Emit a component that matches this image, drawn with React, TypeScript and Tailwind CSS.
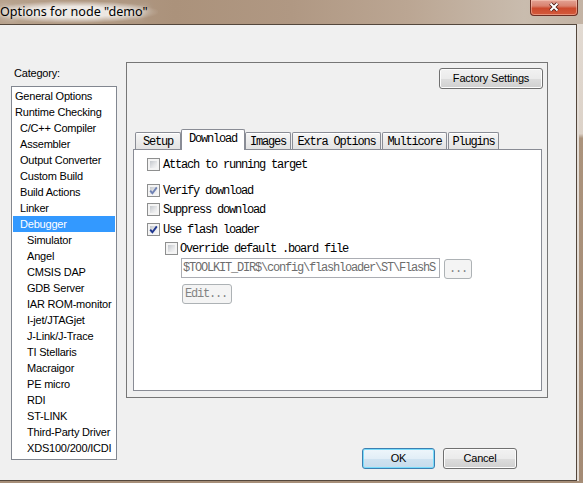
import React from "react";

const uiFont = "font-['Liberation_Sans',Arial,sans-serif] text-[11px] tracking-[-0.2px]";
const monoFont = "font-['Liberation_Mono','Courier_New',monospace] text-[12px] tracking-[-1.2px]";

const btnNormal =
  "rounded-[3px] border border-[#707070] bg-[linear-gradient(to_bottom,#f2f2f2_0%,#ebebeb_50%,#dddddd_51%,#cfcfcf_100%)] shadow-[inset_0_0_0_1px_#fcfcfc] text-black flex items-center justify-center";
const btnDefault =
  "rounded-[3px] border border-[#3c7fb1] bg-[linear-gradient(to_bottom,#eef6fb_0%,#e2eef7_50%,#d0e3f1_51%,#c6dbeb_100%)] shadow-[inset_0_0_0_1px_#79dcfb] text-black flex items-center justify-center";
const btnDisabled =
  "rounded-[3px] border border-[#adb2b5] bg-[#f4f4f4] text-[#838383] flex items-center";

type Item = { label: string; level: 0 | 1 | 2; selected?: boolean };

const categories: Item[] = [
  { label: "General Options", level: 0 },
  { label: "Runtime Checking", level: 0 },
  { label: "C/C++ Compiler", level: 1 },
  { label: "Assembler", level: 1 },
  { label: "Output Converter", level: 1 },
  { label: "Custom Build", level: 1 },
  { label: "Build Actions", level: 1 },
  { label: "Linker", level: 1 },
  { label: "Debugger", level: 1, selected: true },
  { label: "Simulator", level: 2 },
  { label: "Angel", level: 2 },
  { label: "CMSIS DAP", level: 2 },
  { label: "GDB Server", level: 2 },
  { label: "IAR ROM-monitor", level: 2 },
  { label: "I-jet/JTAGjet", level: 2 },
  { label: "J-Link/J-Trace", level: 2 },
  { label: "TI Stellaris", level: 2 },
  { label: "Macraigor", level: 2 },
  { label: "PE micro", level: 2 },
  { label: "RDI", level: 2 },
  { label: "ST-LINK", level: 2 },
  { label: "Third-Party Driver", level: 2 },
  { label: "XDS100/200/ICDI", level: 2 },
];

const indent: Record<number, string> = {
  0: "pl-[2px]",
  1: "pl-[7px]",
  2: "pl-[14px]",
};

type Tab = { label: string; w: string; selected?: boolean };

const tabs: Tab[] = [
  { label: "Setup", w: "w-[46px]" },
  { label: "Download", w: "w-[64px]", selected: true },
  { label: "Images", w: "w-[46px]" },
  { label: "Extra Options", w: "w-[89px] ml-[1px]" },
  { label: "Multicore", w: "w-[65px] ml-[1px]" },
  { label: "Plugins", w: "w-[51px] ml-[1px]" },
];

function CheckBox({ checked, dim }: { checked?: boolean; dim?: boolean }) {
  return (
    <span className="relative w-[13px] h-[13px] shrink-0 border border-[#8e8f8f] bg-[#f4f4f4] p-[2px] flex">
      <span className="flex-1 bg-[linear-gradient(135deg,#c3c7cc_0%,#e6e7e9_60%,#f6f6f6_100%)]" />
      {checked && (
        <svg className="absolute inset-0" width="11" height="11" viewBox="0 0 11 11">
          <path
            d="M2.2 5.6 L4.4 8.2 L8.8 2.4"
            fill="none"
            stroke={dim ? "#6f82b4" : "#1f3790"}
            strokeWidth="1.9"
          />
        </svg>
      )}
    </span>
  );
}

function CheckRow({
  label,
  checked,
  dim,
  className,
  gap,
}: {
  label: string;
  checked?: boolean;
  dim?: boolean;
  className: string;
  gap: string;
}) {
  return (
    <div className={`flex items-center h-[13px] ${className}`}>
      <CheckBox checked={checked} dim={dim} />
      <span className={`${monoFont} text-black whitespace-nowrap leading-[13px] pt-[1px] ${gap}`}>{label}</span>
    </div>
  );
}

function CloseButton() {
  return (
    <div className="ml-auto mr-[5px] w-[48px] h-[16px] shrink-0 rounded-b-[4px] border border-t-0 border-[#6e2d22] bg-[linear-gradient(to_bottom,#e3a294_0%,#d9826f_40%,#cc4a2e_55%,#d45a3c_100%)] shadow-[inset_0_0_0_1px_rgba(255,215,200,0.45)] flex items-center justify-center pb-[2px]">
      <svg width="12" height="10" viewBox="0 0 12 10">
        <path d="M2.5 1.5 L9.5 8.5 M9.5 1.5 L2.5 8.5" stroke="#4a1a14" strokeWidth="3.8" />
        <path d="M2.5 1.5 L9.5 8.5 M9.5 1.5 L2.5 8.5" stroke="#ffffff" strokeWidth="2" />
      </svg>
    </div>
  );
}

export default function App() {
  return (
    <div className="w-[583px] h-[483px] overflow-hidden flex flex-col bg-[#a68e78]">
      {/* caption bar */}
      <div className="h-[24px] shrink-0 flex items-start bg-[linear-gradient(90deg,#b7a18c_0%,#ab927b_30%,#b09883_50%,#bba693_70%,#c9bcae_90%,#c3b3a4_100%)]">
        <div className="h-[24px] flex items-center -ml-[10px]">
          <span className="px-[10px] py-[3px] font-['Noto_Sans','Open_Sans',sans-serif] text-[12.6px] leading-[16px] text-black whitespace-nowrap bg-[radial-gradient(ellipse_at_center,rgba(255,255,255,0.75)_35%,rgba(255,255,255,0)_72%)] [text-shadow:0_0_6px_rgba(255,255,255,0.95),0_0_10px_rgba(255,255,255,0.8)]">
            Options for node "demo"
          </span>
        </div>
        <CloseButton />
      </div>

      <div className="flex h-[457px] shrink-0">
        {/* client area */}
        <div className="w-[577px] h-full bg-[#f0f0f0] border-t border-r border-b border-[#54473c] flex items-start">
          {/* category column */}
          <div className="ml-[11px] w-[106px] pt-[42px] flex flex-col">
            <div className={`${uiFont} text-black leading-[13px] pl-[3px]`}>Category:</div>
            <div className="mt-[6px] h-[374px] border border-[#828790] bg-white pt-[1px]">
              {categories.map((c) => (
                <div
                  key={c.label}
                  className={`mx-[1px] h-[16px] leading-[16px] whitespace-nowrap ${uiFont} ${indent[c.level]} ${
                    c.selected ? "bg-[#3399ff] text-white" : "text-black"
                  }`}
                >
                  {c.label}
                </div>
              ))}
            </div>
          </div>

          {/* options column */}
          <div className="ml-[9px] pt-[37px] flex flex-col">
            <div className="w-[422px] h-[336px] border border-[#767676] flex flex-col">
              <div className="flex justify-end pt-[5px] pr-[4px]">
                <div className={`w-[104px] h-[21px] ${btnNormal} ${uiFont}`}>Factory Settings</div>
              </div>

              {/* tab strip */}
              <div className="mt-[40px] ml-[6px] pl-[2px] h-[20px] flex items-end">
                {tabs.map((t) =>
                  t.selected ? (
                    <div
                      key={t.label}
                      className={`${t.w} h-[21px] -mb-[1px] relative z-10 bg-white border border-b-0 border-[#898c95] rounded-t-[2px] flex items-center justify-center pb-[2px] ${monoFont} text-black`}
                    >
                      {t.label}
                    </div>
                  ) : (
                    <div
                      key={t.label}
                      className={`${t.w} h-[17px] border border-b-0 border-[#898c95] rounded-t-[2px] bg-[linear-gradient(to_bottom,#f6f6f6_0%,#ececec_50%,#e2e2e2_100%)] shadow-[inset_0_1px_0_#ffffff] flex items-center justify-center pt-[2px] ${monoFont} text-black`}
                    >
                      {t.label}
                    </div>
                  )
                )}
              </div>

              {/* tab page */}
              <div className="ml-[6px] w-[409px] h-[242px] border border-[#898c95] bg-white flex flex-col">
                <CheckRow label="Attach to running target" className="mt-[8px] ml-[13px]" gap="ml-[3px]" />
                <CheckRow label="Verify download" checked dim className="mt-[13px] ml-[13px]" gap="ml-[3px]" />
                <CheckRow label="Suppress download" className="mt-[6px] ml-[13px]" gap="ml-[3px]" />
                <CheckRow label="Use flash loader" checked className="mt-[7px] ml-[13px]" gap="ml-[3px]" />
                <CheckRow label="Override default .board file" className="mt-[6px] ml-[31px]" gap="ml-[2px]" />

                <div className="mt-[3px] ml-[47px] flex items-start gap-[4px]">
                  <div className="w-[259px] h-[20px] border border-[#abadb3] bg-white flex items-center pl-[1px] pr-[1px]">
                    <span className={`block w-full overflow-hidden ${monoFont} leading-[14px] text-[#6d6d6d] whitespace-nowrap`}>
                      {"$TOOLKIT_DIR$\\config\\flashloader\\ST\\FlashS"}
                    </span>
                  </div>
                  <div className={`mt-[1px] w-[28px] h-[20px] ${btnDisabled} justify-center ${monoFont}`}>...</div>
                </div>

                <div className={`mt-[5px] ml-[48px] w-[50px] h-[20px] ${btnDisabled} pl-[2px] ${monoFont}`}>
                  Edit...
                </div>
              </div>
            </div>

            <div className="mt-[50px] flex justify-end gap-[8px] pr-[31px]">
              <div className={`w-[73px] h-[21px] ${btnDefault} ${uiFont}`}>OK</div>
              <div className={`w-[74px] h-[21px] ${btnNormal} ${uiFont}`}>Cancel</div>
            </div>
          </div>
        </div>

        {/* right window frame */}
        <div className="flex-1 border-l-2 border-[#e4ddd6] bg-[linear-gradient(to_bottom,#e2dad2_0%,#dcd2c8_24%,#ab937c_25%,#a48b75_100%)]" />
      </div>
    </div>
  );
}
